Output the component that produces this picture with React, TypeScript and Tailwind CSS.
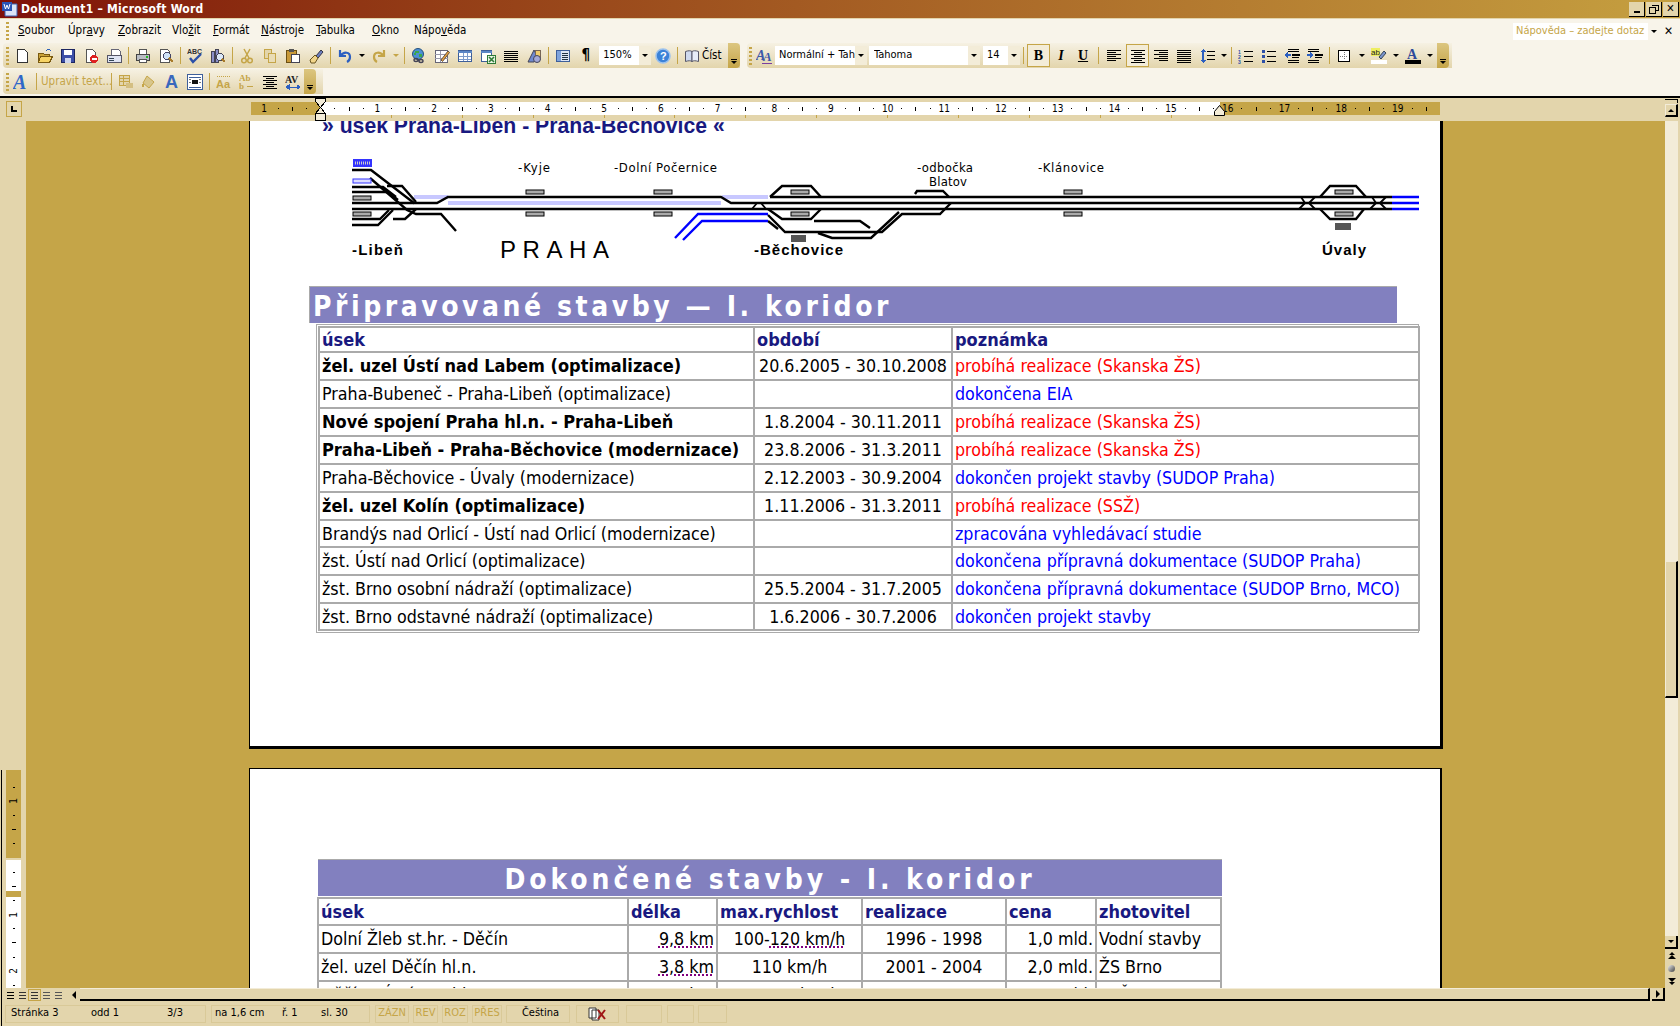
import type { ReactNode } from "react"

const ui = "font-['DejaVu_Sans_Condensed','DejaVu_Sans',sans-serif]"

function Ic({ children, w = 16 }: { children: ReactNode; w?: number }) {
  return (
    <svg width={w} height="16" viewBox={`0 0 ${w} 16`} shapeRendering="crispEdges">
      {children}
    </svg>
  )
}

const lines = (ys: number[], x1: number, x2: number, c = "#000") =>
  ys.map((y) => <path key={y} d={`M${x1} ${y}.5H${x2}`} stroke={c} />)

const icons: Record<string, ReactNode> = {
  new: <path d="M3.5 1.5h7l3 3v10h-10z" fill="#fff" stroke="#333" />,
  open: (
    <>
      <path d="M1.5 5.5h5l1 1h5v8h-11z" fill="#c9a33a" stroke="#7a5a10" />
      <path d="M3.5 8.5h12l-3 6h-11z" fill="#f6d365" stroke="#7a5a10" />
      <path d="M9 3c2-2 4-2 5 0" fill="none" stroke="#2d5fb3" />
    </>
  ),
  save: (
    <>
      <path d="M1.5 1.5h13v13h-13z" fill="#3d4fa8" stroke="#1c2560" />
      <path d="M4 2h8v5H4z" fill="#fff" />
      <path d="M5 10h6v5H5z" fill="#cfd6ee" />
    </>
  ),
  perm: (
    <>
      <path d="M3.5 1.5h6l3 3v10h-9z" fill="#fff" stroke="#555" />
      <circle cx="11" cy="11" r="4" fill="#d22" />
      <path d="M8.5 10h5v2h-5z" fill="#fff" />
    </>
  ),
  mail: (
    <>
      <path d="M5.5 1.5h7l2 2v4h-9z" fill="#fff" stroke="#667" />
      <path d="M1.5 7.5h14v7h-14z" fill="#dfe4f4" stroke="#556" />
      <path d="M3 10h5v1H3zM3 12h5v1H3z" fill="#345" />
    </>
  ),
  print: (
    <>
      <path d="M4.5 1.5h7v5h-7z" fill="#fff" stroke="#555" />
      <path d="M1.5 6.5h13v6h-13z" fill="#b9bcc4" stroke="#444" />
      <path d="M4.5 11.5h7v3h-7z" fill="#fff" stroke="#555" />
      <path d="M11 8h2v2h-2z" fill="#2b2" />
    </>
  ),
  preview: (
    <>
      <path d="M2.5 1.5h7l2 2v11h-9z" fill="#fff" stroke="#555" />
      <circle cx="9" cy="8" r="3.5" fill="#cfe2f7" stroke="#446" />
      <path d="M11 10l4 4" stroke="#a87b2b" strokeWidth="2" />
    </>
  ),
  spell: (
    <>
      <text x="0" y="6" fontSize="7" fontWeight="700" fontFamily="Liberation Sans" fill="#333">ABC</text>
      <path d="M3 10l3 4 8-8" fill="none" stroke="#2b50a8" strokeWidth="2.4" shapeRendering="auto" />
    </>
  ),
  research: (
    <>
      <path d="M1.5 3.5h3v11h-3zM5.5 1.5h3v13h-3z" fill="#8a8fc8" stroke="#445" />
      <circle cx="10" cy="9" r="3.5" fill="#dbe8f8" stroke="#445" />
      <path d="M12 11l3 3" stroke="#a87b2b" strokeWidth="2" />
    </>
  ),
  cut: (
    <g stroke="#c5a548" fill="none" strokeWidth="1.5" shapeRendering="auto">
      <path d="M5 1l5 9M11 1L6 10" />
      <circle cx="5" cy="12.5" r="2.3" />
      <circle cx="11" cy="12.5" r="2.3" />
    </g>
  ),
  copy: (
    <>
      <path d="M2.5 1.5h7v9h-7z" fill="#e3d5ac" stroke="#c5a548" />
      <path d="M6.5 5.5h7v9h-7z" fill="#e9dcb6" stroke="#c5a548" />
    </>
  ),
  paste: (
    <>
      <path d="M1.5 2.5h10v12h-10z" fill="#c99a3a" stroke="#6b4f13" />
      <path d="M4 1h5v3H4z" fill="#555" />
      <path d="M6.5 6.5h8v8h-8z" fill="#fff" stroke="#445" />
    </>
  ),
  brush: (
    <>
      <path d="M8 8l5-6 2 2-5 6z" fill="#6d7fc0" stroke="#334" shapeRendering="auto" />
      <path d="M2 12l5-5 3 3-3 5H3z" fill="#f1d58a" stroke="#6a5520" shapeRendering="auto" />
    </>
  ),
  undo: <path d="M3 2v6h6M3.5 8C7 3 13 4 13 9c0 2-1 4-3 5" fill="none" stroke="#2c5fc0" strokeWidth="2.2" shapeRendering="auto" />,
  redo: <path d="M13 2v6H7M12.5 8C9 3 3 4 3 9c0 2 1 4 3 5" fill="none" stroke="#c5a548" strokeWidth="2.2" shapeRendering="auto" />,
  globe: (
    <>
      <circle cx="7" cy="6" r="5.5" fill="#4b8fd4" stroke="#24507e" shapeRendering="auto" />
      <path d="M4 3h4v2H5v2H3zM8 6h3v3H8z" fill="#3da84a" />
      <path d="M3 12c0-2 4-2 4 0s-4 2-4 0zM8 13c0-2 4-2 4 0s-4 2-4 0z" fill="none" stroke="#445" strokeWidth="1.4" shapeRendering="auto" />
    </>
  ),
  borders: (
    <>
      <path d="M1.5 2.5h12v12h-12z" fill="#fff" stroke="#667" />
      <path d="M1 6h13M1 10h13M6 3v11" stroke="#99a" />
      <path d="M7 12l7-9 1.5 1.5-7 9z" fill="#e9a13b" stroke="#654" shapeRendering="auto" />
    </>
  ),
  table: (
    <>
      <path d="M1.5 2.5h13v11h-13z" fill="#fff" stroke="#3e5f9a" />
      <path d="M1 3h14v2H1z" fill="#5b86c6" />
      <path d="M6 5v8M10.500 5v8M2 8.500h12M2 11h12" stroke="#7d9bcb" />
    </>
  ),
  excel: (
    <>
      <path d="M1.5 2.5h10v11h-10z" fill="#fff" stroke="#3e5f9a" />
      <path d="M1 3h11v2H1z" fill="#5b86c6" />
      <path d="M7.500 7.500h8v8h-8z" fill="#e9f3e3" stroke="#2d7a35" />
      <path d="M9 9l5 5M14 9l-5 5" stroke="#2d7a35" strokeWidth="1.6" shapeRendering="auto" />
    </>
  ),
  columns: <>{lines([3, 5, 7, 9, 11, 13], 1, 15)}</>,
  drawing: (
    <>
      <path d="M2 14L8 2l3 6-3 6z" fill="#6f89cf" stroke="#445" shapeRendering="auto" />
      <path d="M9 2h5v7H9z" fill="#eecb6b" stroke="#765" />
      <circle cx="11" cy="11" r="3.5" fill="#a3a8d8" stroke="#445" shapeRendering="auto" />
    </>
  ),
  docmap: (
    <>
      <path d="M1.5 2.5h13v11h-13z" fill="#dfe6f5" stroke="#3e5f9a" />
      <path d="M7 5h6M7 7h6M7 9h6M7 11h6" stroke="#234" />
      <path d="M2 3h4v10H2z" fill="#7fa3dc" />
    </>
  ),
  help: (
    <>
      <circle cx="8" cy="8" r="7" fill="#3b82d8" stroke="#9cc2ee" strokeWidth="1.6" shapeRendering="auto" />
      <text x="5" y="12" fontSize="11" fontWeight="700" fontFamily="Liberation Sans" fill="#fff">?</text>
    </>
  ),
  read: (
    <>
      <path d="M1.5 3.500c3-1 5-1 6.500 0v10c-1.500-1-3.500-1-6.500 0z" fill="#cfd9ee" stroke="#556" shapeRendering="auto" />
      <path d="M14.500 3.500c-3-1-5-1-6.500 0v10c1.500-1 3.500-1 6.500 0z" fill="#e8edf8" stroke="#556" shapeRendering="auto" />
    </>
  ),
  style: (
    <>
      <text x="0" y="12" fontSize="14" fontStyle="italic" fontWeight="700" fontFamily="Liberation Serif" fill="#3c58a8">A</text>
      <text x="7" y="13" fontSize="13" fontStyle="italic" fontWeight="700" fontFamily="Liberation Serif" fill="#3c58a8">A</text>
      <path d="M6 15h10" stroke="#7b3fa0" />
    </>
  ),
  left: <>{lines([2, 6, 10], 1, 15)}{lines([4, 8, 12], 1, 10)}</>,
  center: <>{lines([2, 6, 10, 14], 1, 15)}{lines([4, 8, 12], 4, 12)}</>,
  right: <>{lines([2, 6, 10], 1, 15)}{lines([4, 8, 12], 6, 15)}</>,
  justify: lines([2, 4, 6, 8, 10, 12, 14], 1, 15),
  spacing: (
    <>
      <path d="M4 1l3 3H1zM4 15l3-3H1z" fill="#2c5fc0" />
      <path d="M3 4h2v8H3z" fill="#2c5fc0" />
      {lines([3, 7, 11], 8, 16)}
    </>
  ),
  numbered: (
    <>
      <text x="0" y="6" fontSize="5" fontWeight="700" fontFamily="Liberation Sans" fill="#2c4fa8">1</text>
      <text x="0" y="11" fontSize="5" fontWeight="700" fontFamily="Liberation Sans" fill="#2c4fa8">2</text>
      <text x="0" y="16" fontSize="5" fontWeight="700" fontFamily="Liberation Sans" fill="#2c4fa8">3</text>
      {lines([3, 8, 13], 6, 15)}
    </>
  ),
  bullets: (
    <>
      <path d="M1 2h3v3H1zM1 7h3v3H1zM1 12h3v3H1z" fill="#2c4fa8" />
      {lines([3, 8, 13], 6, 15)}
    </>
  ),
  outdent: (
    <>
      {lines([1, 3, 12, 14], 4, 15)}
      <path d="M8 6h8v2H8z" />
      <path d="M0 7l4-3v6z" fill="#2c5fc0" />
      <path d="M4 6h3v2H4z" fill="#2c5fc0" />
      <path d="M8 9h7v1H8z" />
    </>
  ),
  indent: (
    <>
      {lines([1, 3, 12, 14], 1, 12)}
      <path d="M8 6h8v2H8z" />
      <path d="M7 7L3 4v6z" fill="#2c5fc0" />
      <path d="M0 6h3v2H0z" fill="#2c5fc0" />
      <path d="M8 9h7v1H8z" />
    </>
  ),
  border: (
    <>
      <path d="M2.500 2.500h11v11h-11z" fill="#fff" stroke="#000" />
      <path d="M8 4v8M4 8h8" stroke="#777" strokeDasharray="1 1" />
    </>
  ),
  marker: (
    <>
      <path d="M0 0h9v8H0z" fill="#eeee60" />
      <text x="0" y="7" fontSize="8" fontFamily="Liberation Sans" fill="#222">ab</text>
      <path d="M8 9l5-6 2 2-5 6z" fill="#7a93cc" stroke="#345" shapeRendering="auto" />
      <path d="M0 12h16v4H0z" fill="#fff" />
    </>
  ),
  color: (
    <>
      <text x="2" y="11" fontSize="14" fontWeight="700" fontFamily="Liberation Serif" fill="#2e4a9a">A</text>
      <path d="M0 12h16v4H0z" fill="#000" />
    </>
  ),
  wordart: (
    <>
      <text x="0" y="15" fontSize="20" fontStyle="italic" fontWeight="700" fontFamily="Liberation Serif" fill="#2f67c9">A</text>
    </>
  ),
  format: (
    <>
      <path d="M1 1h10v10H1z" fill="#e3d5ac" stroke="#c5a548" />
      <path d="M1 4h10M1 7h10M5 1v10" stroke="#c5a548" />
      <path d="M8 9h7v5H8z" fill="#d4bf82" />
    </>
  ),
  paint: (
    <>
      <path d="M6 2l7 6-5 6-6-5z" fill="#d8c68c" stroke="#c5a548" shapeRendering="auto" />
      <path d="M2 9c-2 2-1 4 0 4s1-2 0-4z" fill="#c5a548" />
    </>
  ),
  bigA: <text x="1" y="14" fontSize="18" fontWeight="700" fontFamily="Liberation Sans" fill="#3968bd">A</text>,
  wrap: (
    <>
      <path d="M.500.500h15v15H.500z" fill="#fff" stroke="#3e5f9a" />
      <path d="M2 3h12M2 13h12" stroke="#3e5f9a" />
      <path d="M5 6h6v4H5z" fill="#111" />
      <path d="M2 5h2M12 5h2M2 8h2M12 8h2" stroke="#777" />
    </>
  ),
  aa: (
    <>
      <path d="M1 2h14" stroke="#c5a548" strokeDasharray="1 1" />
      <text x="0" y="14" fontSize="11" fontWeight="700" fontFamily="Liberation Sans" fill="#c5a548">Aa</text>
    </>
  ),
  ab: (
    <>
      <text x="0" y="7" fontSize="9" fontWeight="700" fontFamily="Liberation Serif" fill="#c5a548">Ab</text>
      <text x="0" y="15" fontSize="9" fontWeight="700" fontFamily="Liberation Serif" fill="#c5a548">b</text>
      <path d="M8 12h6" stroke="#c5a548" />
    </>
  ),
  av: (
    <>
      <text x="0" y="9" fontSize="10" fontWeight="700" fontFamily="Liberation Serif" fill="#222">AV</text>
      <path d="M1 13h14M1 13l3-2v4zM15 13l-3-2v4z" fill="#2c5fc0" stroke="#2c5fc0" />
    </>
  ),
}

function Tool({ name, active, w = "w-[23px]" }: { name: string; active?: boolean; w?: string }) {
  return (
    <div
      className={`${w} h-[23px] shrink-0 flex items-center justify-center ${
        active ? "border border-[#c5a548] bg-[#f3ecd8]" : ""
      }`}
    >
      <Ic>{icons[name]}</Ic>
    </div>
  )
}

function Sep({ w = "w-[6px]" }: { w?: string }) {
  return (
    <div className={`${w} h-full shrink-0 flex items-center justify-center`}>
      <div className="w-px h-[17px] bg-[#c5a548]" />
    </div>
  )
}

function Arrow({ w = "w-[11px]", c = "border-t-black" }: { w?: string; c?: string }) {
  return (
    <div className={`${w} shrink-0 flex items-center justify-center`}>
      <div className={`border-x-[3px] border-x-transparent border-t-[3px] ${c}`} />
    </div>
  )
}

function Grip() {
  return (
    <div className="w-[3px] h-[18px] shrink-0 bg-[repeating-linear-gradient(180deg,#c5a548_0,#c5a548_2px,transparent_2px,transparent_4px)]" />
  )
}

function Chevron() {
  return (
    <div className="w-[12px] h-full shrink-0 rounded-r bg-gradient-to-b from-[#dcc680] to-[#c5a548] flex flex-col items-center justify-end pb-[4px] gap-px">
      <div className="w-[6px] h-px bg-black" />
      <div className="border-x-[3px] border-x-transparent border-t-[3px] border-t-black" />
    </div>
  )
}

function Combo({ text, w, pad = "pl-[4px]" }: { text: string; w: string; pad?: string }) {
  return (
    <div className={`${w} h-[19px] shrink-0 bg-white flex items-center justify-between text-[11px] text-black ${pad}`}>
      <span className="truncate">{text}</span>
      <div className="w-[12px] h-full shrink-0 bg-[#f3ecd8] flex items-center justify-center">
        <div className="border-x-[3px] border-x-transparent border-t-[3px] border-t-black" />
      </div>
    </div>
  )
}

const bar = "h-[25px] flex items-center rounded-l bg-gradient-to-b from-[#f6f1e3] to-[#e3d5ac]"

function Ruler() {
  const marks = Array.from({ length: 84 }, (_, k) => k - 4)
  return (
    <div className="w-[1189px] h-[13px] flex text-[10px] leading-none text-black overflow-hidden pl-[6px] bg-[linear-gradient(90deg,#c5a548_70px,#fff_70px,#fff_969px,#c5a548_969px)]">
      {marks.map((i) => (
        <div key={i} className="w-[14.175px] h-full shrink-0 flex items-center justify-center">
          {i === 0 ? null : i % 4 === 0 ? (
            <span>{Math.abs(i / 4)}</span>
          ) : i % 2 === 0 ? (
            <div className="w-px h-[4px] bg-black" />
          ) : (
            <div className="w-px h-px bg-black" />
          )}
        </div>
      ))}
    </div>
  )
}

function VRuler() {
  const marks = Array.from({ length: 15 }, (_, k) => k - 5)
  return (
    <div className="w-[15px] h-[218px] ml-[4px] mt-[649px] flex flex-col text-[10px] leading-none text-black overflow-hidden pt-[10px] bg-[linear-gradient(180deg,#c5a548_88px,#e3d5ac_88px,#e3d5ac_90px,#fff_90px,#fff_121px,#c5a548_121px,#c5a548_127px,#fff_127px)]">
      {marks.map((i) => (
        <div key={i} className="h-[14.175px] w-full shrink-0 flex items-center justify-center">
          {i === 0 ? null : i % 4 === 0 ? (
            <span className="-rotate-90">{Math.abs(i / 4)}</span>
          ) : i % 2 === 0 ? (
            <div className="w-[4px] h-px bg-black" />
          ) : (
            <div className="w-[2px] h-px bg-black" />
          )}
        </div>
      ))}
    </div>
  )
}

function RailMap() {
  const platforms = [
    [526, 192], [526, 214], [654, 192], [654, 214], [791, 192], [791, 214],
    [1064, 192], [1064, 214], [1335, 192], [1335, 214], [353, 198], [353, 214],
  ]
  return (
    <svg width="1090" height="125" viewBox="340 145 1090 125" className="block">
      <path d="M414 197H448M448 203H721M722 197H768" stroke="#c8c8ff" strokeWidth="4" fill="none" />
      <g fill="none" stroke="#000" strokeWidth="2.4">
        <path d="M352 170H371L414 203H437L448 197H721L731 203H1392" />
        <path d="M352 209H1392" />
        <path d="M770 197H1392" />
        <path d="M352 187H383L396 197" />
        <path d="M352 192H388L398 200" />
        <path d="M387 186H402L416 202" />
        <path d="M370 178L407 210L416 214H441L456 231" />
        <path d="M352 203H414" />
        <path d="M352 219H380L389 210" />
        <path d="M352 225H378L393 210" />
        <path d="M393 219H405L416 209" />
        <path d="M770 197L782 186H811L821 197" />
        <path d="M768 209L782 219H811L821 209" />
        <path d="M768 215L785 232H860L882 232L902 214H940L951 203" />
        <path d="M768 221L778 229" />
        <path d="M814 221H860L870 228" />
        <path d="M818 233L832 238H871L899 212" />
        <path d="M915 194L917 191H943L949 197" />
        <path d="M1320 197L1330 186H1356L1366 197" />
        <path d="M1320 209L1330 219H1356L1364 209" />
        <path d="M1299 209L1305 203M1309 203L1315 209M1301 197L1305 203M1315 197L1309 203" strokeWidth="1.8" />
        <path d="M1370 209L1376 203M1380 203L1386 209M1372 197L1376 203M1386 197L1380 203" strokeWidth="1.8" />
        <path d="M752 209L757 203M761 203L766 209" strokeWidth="1.8" />
      </g>
      <g fill="none" stroke="#0000ff" strokeWidth="2.4">
        <path d="M675 238L698 214H768" />
        <path d="M683 240L702 221H768" />
        <path d="M1392 197H1419M1392 203H1419M1392 209H1419" />
      </g>
      {platforms.map(([x, y]) => (
        <rect key={`${x}-${y}`} x={x} y={y - 2} width="18" height="4" fill="#aaa" stroke="#000" />
      ))}
      <rect x="353" y="159" width="19" height="8" fill="#3333ff" />
      <path d="M355 163h15" stroke="#ccc" strokeWidth="3" strokeDasharray="1 1" />
      <rect x="353" y="179" width="18" height="4" fill="#ddf" stroke="#3333ff" />
      <rect x="791" y="235" width="15" height="7" fill="#555" />
      <rect x="1335" y="223" width="16" height="7" fill="#555" />
      <g fontFamily="'DejaVu Sans Condensed','DejaVu Sans',sans-serif" fontSize="13" fill="#000">
        <text x="518" y="172" textLength="32">-Kyje</text>
        <text x="614" y="172" textLength="103">-Dolní Počernice</text>
        <text x="917" y="172" textLength="56">-odbočka</text>
        <text x="929" y="186" textLength="38">Blatov</text>
        <text x="1038" y="172" textLength="66">-Klánovice</text>
      </g>
      <g fontFamily="'Liberation Sans',sans-serif" fontSize="15" fontWeight="700" fill="#000">
        <text x="352" y="255" textLength="51">-Libeň</text>
        <text x="754" y="255" textLength="89">-Běchovice</text>
        <text x="1322" y="255" textLength="44">Úvaly</text>
      </g>
      <text x="500" y="258" fontFamily="'Liberation Sans',sans-serif" fontSize="24" fill="#000" textLength="109">PRAHA</text>
    </svg>
  )
}

const koridor = [
  { a: "žel. uzel Ústí nad Labem (optimalizace)", b: "20.6.2005 - 30.10.2008", c: "probíhá realizace (Skanska ŽS)", bold: true, red: true, h: "h-[28px]" },
  { a: "Praha-Bubeneč - Praha-Libeň (optimalizace)", b: "", c: "dokončena EIA", h: "h-[28px]" },
  { a: "Nové spojení Praha hl.n. - Praha-Libeň", b: "1.8.2004 - 30.11.2011", c: "probíhá realizace (Skanska ŽS)", bold: true, red: true, h: "h-[28px]" },
  { a: "Praha-Libeň - Praha-Běchovice (modernizace)", b: "23.8.2006 - 31.3.2011", c: "probíhá realizace (Skanska ŽS)", bold: true, red: true, h: "h-[28px]" },
  { a: "Praha-Běchovice - Úvaly (modernizace)", b: "2.12.2003 - 30.9.2004", c: "dokončen projekt stavby (SUDOP Praha)", h: "h-[28px]" },
  { a: "žel. uzel Kolín (optimalizace)", b: "1.11.2006 - 31.3.2011", c: "probíhá realizace (SSŽ)", bold: true, red: true, h: "h-[28px]" },
  { a: "Brandýs nad Orlicí - Ústí nad Orlicí (modernizace)", b: "", c: "zpracována vyhledávací studie", h: "h-[27px]" },
  { a: "žst. Ústí nad Orlicí (optimalizace)", b: "", c: "dokončena přípravná dokumentace (SUDOP Praha)", h: "h-[28px]" },
  { a: "žst. Brno osobní nádraží (optimalizace)", b: "25.5.2004 - 31.7.2005", c: "dokončena přípravná dokumentace (SUDOP Brno, MCO)", h: "h-[28px]" },
  { a: "žst. Brno odstavné nádraží (optimalizace)", b: "1.6.2006 - 30.7.2006", c: "dokončen projekt stavby", h: "h-[27px]" },
]

const cell = "border-2 border-[#aaa] px-[2px] py-0 leading-[20px] whitespace-nowrap overflow-hidden"
const head = "border-2 border-[#aaa] px-[2px] py-0 leading-[20px] text-left text-[18px] font-bold text-[#191980]"
const dots = "underline decoration-dotted decoration-[#800080] underline-offset-2"

const done = [
  ["Dolní Žleb st.hr. - Děčín", "9,8 km", "100-120 km/h", "1996 - 1998", "1,0 mld.", "Vodní stavby"],
  ["žel. uzel Děčín hl.n.", "3,8 km", "110 km/h", "2001 - 2004", "2,0 mld.", "ŽS Brno"],
  ["Děčín - Ústí n.L. hl.n.", "17,0 km", "85-120 km/h", "2001 - 2003", "1,0 mld.", "SSŽ"],
]

function Page1() {
  return (
    <div className="w-[1194px] h-[628px] bg-white border-l border-r-[3px] border-b-[3px] border-black overflow-hidden shrink-0">
      <div className="ml-[72px] -mt-[7px] h-[24px] flex items-center font-['Liberation_Sans',sans-serif] font-bold text-[21.2px] text-[#191980] whitespace-nowrap">
        » úsek Praha-Libeň - Praha-Běchovice «
      </div>
      <div className="ml-[90px] mt-[7px]">
        <RailMap />
      </div>
      <div className="ml-[59px] w-[1088px] h-[37px] mt-[16px] bg-[#8280bf] border-t border-l border-[#aaa] pl-[3px] text-[28px] leading-[39px] font-bold tracking-[3.55px] text-white whitespace-nowrap overflow-hidden">
        Připravované stavby — I. koridor
      </div>
      <div className="ml-[66px] w-[1103px] mt-px border border-[#aaa] p-px text-[17.7px] text-black">
        <table className="w-[1100px] table-fixed border-collapse">
          <colgroup>
            <col className="w-[435px]" />
            <col className="w-[198px]" />
            <col className="w-[467px]" />
          </colgroup>
          <thead>
            <tr className="h-[25px]">
              <th className={head}>úsek</th>
              <th className={head}>období</th>
              <th className={head}>poznámka</th>
            </tr>
          </thead>
          <tbody>
            {koridor.map((r) => (
              <tr key={r.a} className={r.h}>
                <td className={`${cell} ${r.bold ? "font-bold text-[18px]" : ""}`}>{r.a}</td>
                <td className={`${cell} text-center`}>{r.b}</td>
                <td className={`${cell} ${r.red ? "text-[#ff0000]" : "text-[#0000ff]"}`}>{r.c}</td>
              </tr>
            ))}
          </tbody>
        </table>
      </div>
    </div>
  )
}

function Page2() {
  return (
    <div className="w-[1193px] h-[400px] mt-[19px] bg-white border-l border-t border-r-[2px] border-black shrink-0 pt-[90px]">
      <div className="ml-[68px] w-[904px] h-[37px] bg-[#8280bf] border-t border-[#aaa] text-center text-[28px] leading-[39px] font-bold tracking-[3.9px] text-white whitespace-nowrap overflow-hidden">
        Dokončené stavby - I. koridor
      </div>
      <div className="ml-[66px] w-[905px] p-px text-[17.7px] text-black">
        <table className="w-[903px] table-fixed border-collapse">
          <colgroup>
            <col className="w-[310px]" />
            <col className="w-[89px]" />
            <col className="w-[145px]" />
            <col className="w-[144px]" />
            <col className="w-[90px]" />
            <col className="w-[125px]" />
          </colgroup>
          <thead>
            <tr className="h-[27px]">
              {["úsek", "délka", "max.rychlost", "realizace", "cena", "zhotovitel"].map((t) => (
                <th key={t} className={head}>{t}</th>
              ))}
            </tr>
          </thead>
          <tbody>
            {done.map((r, i) => (
              <tr key={r[0]} className="h-[28px]">
                <td className={cell}>{r[0]}</td>
                <td className={`${cell} text-right`}>
                  <span className={i < 2 ? dots : ""}>{r[1]}</span>
                </td>
                <td className={`${cell} text-center`}>
                  {i === 0 ? (
                    <>
                      100-<span className={dots}>120 km/h</span>
                    </>
                  ) : (
                    r[2]
                  )}
                </td>
                <td className={`${cell} text-center`}>{r[3]}</td>
                <td className={`${cell} text-right`}>{r[4]}</td>
                <td className={cell}>{r[5]}</td>
              </tr>
            ))}
          </tbody>
        </table>
      </div>
    </div>
  )
}

const menu = [
  { pre: "", u: "S", post: "oubor", w: "w-[50px]" },
  { pre: "Úpr", u: "a", post: "vy", w: "w-[50px]" },
  { pre: "", u: "Z", post: "obrazit", w: "w-[54px]" },
  { pre: "Vlo", u: "ž", post: "it", w: "w-[41px]" },
  { pre: "", u: "F", post: "ormát", w: "w-[48px]" },
  { pre: "", u: "N", post: "ástroje", w: "w-[55px]" },
  { pre: "", u: "T", post: "abulka", w: "w-[56px]" },
  { pre: "", u: "O", post: "kno", w: "w-[42px]" },
  { pre: "Nápo", u: "v", post: "ěda", w: "w-[60px]" },
]

const panels = [
  { w: "w-[201px]", pl: "pl-[5px]", items: [["Stránka 3", "w-[80px]"], ["odd 1", "w-[76px]"], ["3/3", "w-[30px]"]] },
  { w: "w-[159px]", pl: "pl-[3px]", items: [["na 1,6 cm", "w-[67px]"], ["ř. 1", "w-[39px]"], ["sl. 30", "w-[40px]"]] },
]

const flags = [
  ["ZÁZN", "w-[34px]"],
  ["REV", "w-[25px]"],
  ["ROZ", "w-[26px]"],
  ["PŘES", "w-[30px]"],
]

export default function App() {
  return (
    <div className={`w-[1680px] h-[1026px] flex flex-col overflow-hidden bg-[#e3d5ac] ${ui}`}>
      {/* Title bar */}
      <div className="h-[18px] shrink-0 flex items-center bg-gradient-to-r from-[#7f0f08] to-[#c5a040] text-white">
        <svg width="18" height="16" viewBox="0 0 18 16" className="ml-[2px] shrink-0">
          <path d="M3 3h12v12H3z" fill="#dbe4f8" stroke="#3b5fb0" />
          <path d="M0 1h10v9H0z" fill="#2b54b8" />
          <path d="M2 3l1.500 5 1.500-4 1.500 4L8 3" fill="none" stroke="#fff" />
        </svg>
        <span className="ml-[1px] text-[12px] font-bold tracking-[0.25px]">Dokument1 – Microsoft Word</span>
        <div className="ml-auto mr-[1px] flex gap-[1px]">
          {["min", "max", "close"].map((b) => (
            <div key={b} className="w-[16px] h-[15px] bg-[#e3d5ac] border-r border-b border-black flex items-center justify-center text-[11px] leading-none font-bold text-black">
              {b === "min" ? <div className="w-[6px] h-[2px] bg-black mt-[7px]" /> : null}
              {b === "max" ? (
                <svg width="10" height="10" viewBox="0 0 10 10" shapeRendering="crispEdges">
                  <path d="M3 1.500h6v5H7M.5 3.500h6v6h-6z" fill="none" stroke="#000" />
                </svg>
              ) : null}
              {b === "close" ? "✕" : null}
            </div>
          ))}
        </div>
      </div>

      {/* Menu bar */}
      <div className="h-[78px] shrink-0 bg-[#f8f4ea] border-t border-[#e3d5ac] flex flex-col relative">
        <div className="h-[24px] flex items-center pl-[6px] text-[11.5px] text-black shrink-0">
          <Grip />
          <div className="flex ml-[9px]">
            {menu.map((m) => (
              <div key={m.u + m.post} className={m.w}>
                {m.pre}
                <u>{m.u}</u>
                {m.post}
              </div>
            ))}
          </div>
          <div className="ml-auto flex items-center pr-[3px]">
            <div className="w-[147px] h-[17px] bg-white flex items-center justify-between pl-[3px] text-[11px] text-[#c5a548] whitespace-nowrap">
              <span>Nápověda – zadejte dotaz</span>
              <div className="w-[12px] h-full bg-[#f8f4ea] flex items-center justify-center">
                <div className="border-x-[3px] border-x-transparent border-t-[3px] border-t-black" />
              </div>
            </div>
            <span className="w-[17px] text-center text-[12px] font-bold">✕</span>
          </div>
        </div>

        {/* Toolbars */}
        <div className="h-[25px] flex shrink-0 pl-[3px]">
          <div className={`${bar} w-[737px] pl-[3px]`}>
            <Grip />
            <div className="w-[3px]" />
            {["new", "open", "save", "perm", "mail"].map((n) => <Tool key={n} name={n} />)}
            <Sep />
            <Tool name="print" />
            <Tool name="preview" />
            <Sep />
            <Tool name="spell" />
            <Tool name="research" />
            <Sep />
            {["cut", "copy", "paste", "brush"].map((n) => <Tool key={n} name={n} />)}
            <Sep />
            <Tool name="undo" />
            <Arrow />
            <Tool name="redo" />
            <Arrow c="border-t-[#c5a548]" />
            <Sep />
            {["globe", "borders", "table", "excel", "columns", "drawing"].map((n) => <Tool key={n} name={n} />)}
            <Sep />
            <Tool name="docmap" />
            <div className="w-[23px] shrink-0 text-center text-[15px] font-bold leading-none">¶</div>
            <div className="ml-[2px]">
              <Combo text="150%" w="w-[52px]" />
            </div>
            <div className="w-px" />
            <Tool name="help" />
            <Sep />
            <div className="w-[3px]" />
            <Tool name="read" w="w-[20px]" />
            <span className="text-[11.5px] w-[26px] shrink-0 whitespace-nowrap">Číst</span>
            <Chevron />
          </div>
          <div className={`${bar} w-[705px] ml-[7px] pl-[2px]`}>
            <Grip />
            <Tool name="style" w="w-[23px]" />
            <Combo text="Normální + Tah" w="w-[92px]" />
            <div className="w-[2px]" />
            <Combo text="Tahoma" w="w-[111px]" pad="pl-[5px]" />
            <div className="w-[3px]" />
            <Combo text="14" w="w-[37px]" />
            <Sep w="w-[7px]" />
            <div className="w-[23px] h-[23px] shrink-0 border border-[#c5a548] bg-[#f3ecd8] flex items-center justify-center font-['Liberation_Serif',serif] font-bold text-[14px]">B</div>
            <div className="w-[22px] text-center font-['Liberation_Serif',serif] font-bold italic text-[14px]">I</div>
            <div className="w-[22px] text-center font-['Liberation_Serif',serif] font-bold underline text-[14px]">U</div>
            <Sep w="w-[8px]" />
            <Tool name="left" w="w-[24px]" />
            <Tool name="center" active />
            <Tool name="right" />
            <Tool name="justify" />
            <Tool name="spacing" w="w-[24px]" />
            <Arrow w="w-[9px]" />
            <Sep />
            <Tool name="numbered" />
            <Tool name="bullets" />
            <Tool name="outdent" />
            <Tool name="indent" />
            <Sep />
            <Tool name="border" w="w-[24px]" />
            <Arrow w="w-[11px]" />
            <Tool name="marker" />
            <Arrow w="w-[11px]" />
            <Tool name="color" />
            <Arrow w="w-[11px]" />
            <div className="w-[2px]" />
            <Chevron />
          </div>
        </div>
        <div className="h-px shrink-0" />
        <div className="h-[25px] flex shrink-0 pl-[3px]">
          <div className={`${bar} w-[320px] pl-[3px]`}>
            <Grip />
            <Tool name="wordart" w="w-[24px]" />
            <Sep />
            <div className="w-[2px]" />
            <span className="w-[67px] shrink-0 text-[11.5px] text-[#c5a548] whitespace-nowrap">Upravit text...</span>
            <Sep />
            <Tool name="format" />
            <Tool name="paint" />
            <Tool name="bigA" />
            <Tool name="wrap" />
            <Sep />
            <Tool name="aa" />
            <Tool name="ab" />
            <Tool name="center" />
            <Tool name="av" />
            <Chevron />
          </div>
        </div>
      </div>

      {/* Horizontal ruler */}
      <div className="h-[25px] shrink-0 border-t-2 border-black flex relative">
        <div className="ml-[6px] mt-[3px] w-[16px] h-[16px] border border-[#c5a548] flex items-center justify-center shrink-0">
          <div className="w-[6px] h-[6px] border-l-2 border-b-2 border-black" />
        </div>
        <div className="ml-[229px] pt-[4px] shrink-0">
          <Ruler />
          <div className="flex pl-[70px] h-[3px]">
            {Array.from({ length: 12 }, (_, i) => (
              <div key={i} className="w-[70.9px] h-full shrink-0 border-r border-[#c5a548]" />
            ))}
          </div>
        </div>
        <svg width="14" height="24" viewBox="0 0 14 24" className="absolute left-[314px] top-0" shapeRendering="crispEdges">
          <path d="M1.500.500h10v3l-5 6 5 6v3h-10v-3l5-6-5-6z" fill="#f3ecd8" stroke="#000" />
          <path d="M1.500 15.500h10v7h-10z" fill="#f3ecd8" stroke="#000" />
        </svg>
        <svg width="14" height="13" viewBox="0 0 14 13" className="absolute left-[1213px] top-[6px]">
          <path d="M1.500 11.500v-4l5-6 5 6v4z" fill="#f3ecd8" stroke="#000" />
        </svg>
        <div className="ml-auto w-[15px] shrink-0 pt-[1px]">
          <div className="w-[13px] h-[4px] border-t border-[#f3ecd8] border-r border-black" />
          <div className="w-[13px] h-[13px] mt-[1px] bg-[#e3d5ac] border-r-2 border-b-2 border-black border-t border-l border-t-[#f3ecd8] border-l-[#f3ecd8] flex items-center justify-center">
            <div className="border-x-[3px] border-x-transparent border-b-[3px] border-b-black" />
          </div>
        </div>
      </div>

      {/* Document area */}
      <div className="h-[867px] shrink-0 flex">
        <div className="w-[26px] shrink-0 pl-px">
          <div className="h-full border-l border-black">
            <VRuler />
          </div>
        </div>
        <div className="w-[1639px] shrink-0 bg-[#c5a548] overflow-hidden pl-[223px] flex flex-col">
          <Page1 />
          <Page2 />
        </div>
        <div className="w-[15px] shrink-0 flex flex-col">
          <div className="w-[13px] h-[440px] bg-[#f3ecd8] shrink-0" />
          <div className="w-[13px] h-[137px] bg-[#e3d5ac] border-l border-t border-[#f3ecd8] border-r-2 border-r-black border-b-2 border-b-black shrink-0" />
          <div className="w-[13px] flex-1 bg-[#f3ecd8]" />
          <div className="w-[13px] h-[13px] bg-[#e3d5ac] border-r-2 border-b-2 border-black flex items-center justify-center shrink-0">
            <div className="border-x-[3px] border-x-transparent border-t-[3px] border-t-black" />
          </div>
          <div className="w-[13px] h-[39px] shrink-0 flex flex-col items-center justify-around text-[9px] leading-none">
            <svg width="8" height="8" viewBox="0 0 8 8"><path d="M4 0l3 3H1zM4 3l4 4H0z" /></svg>
            <div className="w-[7px] h-[7px] rounded-full bg-gradient-to-br from-[#eee] to-[#444]" />
            <svg width="8" height="8" viewBox="0 0 8 8"><path d="M4 8L1 5h6zM4 5L0 1h8z" /></svg>
          </div>
        </div>
      </div>

      {/* Horizontal scroll */}
      <div className="h-[13px] shrink-0 flex items-center">
        <div className="pl-[5px] w-[68px] flex gap-[1px] shrink-0">
          {["#000", "#333", "#333", "#555", "#555"].map((c, i) => (
            <svg key={i} width="11" height="10" viewBox="0 0 11 10" shapeRendering="crispEdges" className={i === 2 ? "outline outline-[#c5a548]" : ""}>
              <path d="M2 2h7M2 5h7M2 8h7" stroke={c} />
            </svg>
          ))}
        </div>
        <div className="w-[12px] flex justify-center shrink-0">
          <div className="border-y-[4px] border-y-transparent border-r-[4px] border-r-black" />
        </div>
        <div className="w-[1570px] h-full shrink-0 bg-[#e3d5ac] border-t border-[#f3ecd8] border-r-2 border-r-black border-b-2 border-b-black" />
        <div className="w-[2px]" />
        <div className="w-[13px] h-full shrink-0 bg-[#e3d5ac] border-r-2 border-b-2 border-black flex items-center justify-center">
          <div className="border-y-[4px] border-y-transparent border-l-[4px] border-l-black" />
        </div>
      </div>

      {/* Status bar */}
      <div className="flex-1 flex items-center pl-[5px] text-[11px] text-black">
        {panels.map((p) => (
          <div key={p.w} className={`${p.w} ${p.pl} h-[18px] mr-[5px] shrink-0 flex items-center border border-[#d9c998]`}>
            {p.items.map(([t, w]) => (
              <span key={t} className={w}>{t}</span>
            ))}
          </div>
        ))}
        {flags.map(([t, w]) => (
          <div key={t} className={`${w} h-[18px] mr-[4px] shrink-0 flex items-center justify-center border border-[#d9c998] text-[#c5a548]`}>
            {t}
          </div>
        ))}
        <div className="w-[64px] h-[18px] mr-[6px] shrink-0 flex items-center justify-center border border-[#d9c998] pl-[5px]">Čeština</div>
        <div className="w-[43px] h-[18px] mr-[7px] shrink-0 flex items-center justify-center border border-[#d9c998]">
          <svg width="20" height="16" viewBox="0 0 20 16">
            <path d="M1 2h7v10H1zM4 4h7v10H4z" fill="#fff" stroke="#333" />
            <path d="M10 4l7 9M17 4l-7 9" stroke="#a01818" strokeWidth="2" />
          </svg>
        </div>
        <div className="w-[36px] h-[18px] mr-[5px] shrink-0 border border-[#d9c998]" />
        <div className="w-[27px] h-[18px] mr-[4px] shrink-0 border border-[#d9c998]" />
        <div className="w-[29px] h-[18px] shrink-0 border border-[#d9c998]" />
      </div>
    </div>
  )
}
